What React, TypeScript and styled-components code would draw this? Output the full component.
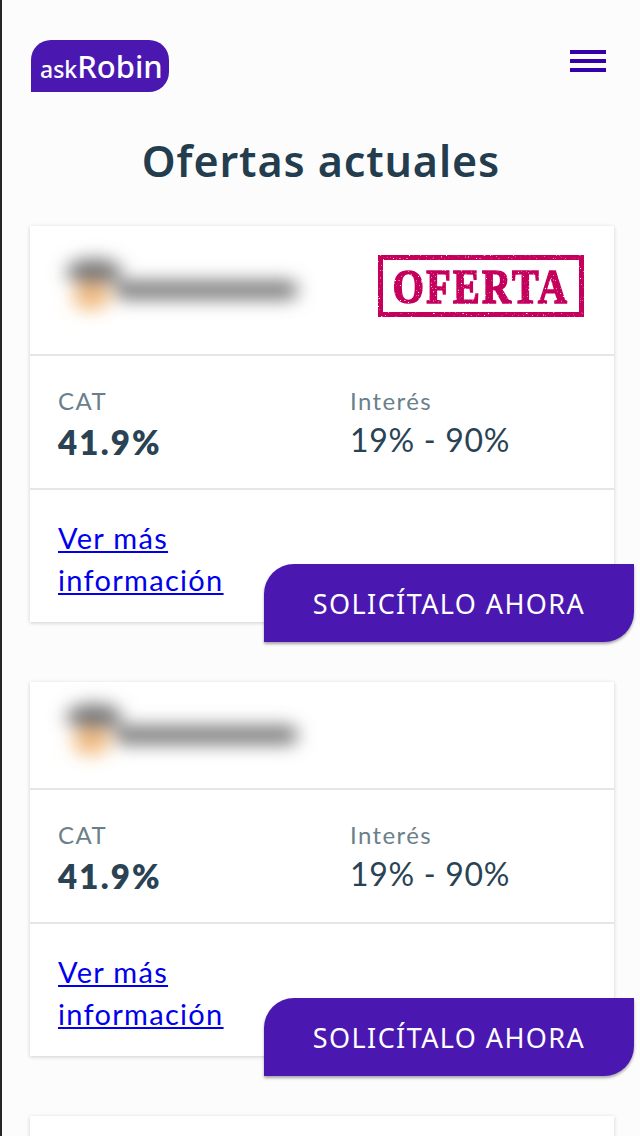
import React from 'react';
import styled, { createGlobalStyle } from 'styled-components';

const GlobalStyle = createGlobalStyle`
  html, body {
    margin: 0;
    padding: 0;
    overflow: hidden;
    background: #fcfcfc;
  }
`;

const Page = styled.div`
  height: 1136px;
  overflow: hidden;
  box-sizing: border-box;
  border-left: 2px solid #262626;
  background: #fcfcfc;
  font-family: 'Lato', 'Noto Sans', sans-serif;
  color: #2a4354;
`;

const Header = styled.header`
  display: flex;
  justify-content: space-between;
  align-items: flex-start;
  padding: 40px 34px 0 29px;
`;

const Logo = styled.div`
  display: flex;
  align-items: baseline;
  box-sizing: border-box;
  width: 138px;
  height: 52px;
  padding: 6px 0 0 9px;
  border-radius: 20px 20px 20px 0;
  background: #4a18b1;
  color: #fff;
  font-family: 'Noto Sans', sans-serif;
  font-weight: 500;
  line-height: 40px;
`;

const LogoSmall = styled.span`
  font-size: 23px;
`;

const LogoBig = styled.span`
  font-size: 31px;
`;

const Burger = styled.div`
  display: flex;
  flex-direction: column;
  gap: 5px;
  width: 36px;
  margin-top: 10px;
`;

const BurgerLine = styled.span`
  height: 4px;
  background: #3300aa;
`;

const Title = styled.h1`
  margin: 39px 0 35px;
  font-family: 'Noto Sans', sans-serif;
  font-size: 43px;
  line-height: 60px;
  font-weight: 600;
  letter-spacing: 0.9px;
  text-align: center;
  color: #233d4e;
`;

const CardList = styled.div`
  display: flex;
  flex-direction: column;
  gap: 60px;
  padding: 0 26px 0 28px;
`;

const Card = styled.section`
  position: relative;
  background: #fff;
  box-shadow: 0 1px 4px rgba(0, 0, 0, 0.18);
`;

const EmptyCard = styled(Card)`
  height: 120px;
`;

const Top = styled.div<{ $tall?: boolean }>`
  display: flex;
  justify-content: space-between;
  align-items: center;
  box-sizing: border-box;
  height: ${(p) => (p.$tall ? 128 : 106)}px;
  padding: 0 30px;
`;

const Blurred = styled.svg`
  display: block;
  width: 250px;
  height: 70px;
  margin-left: -4px;
  overflow: visible;
`;

const Stamp = styled.div`
  display: flex;
  align-items: center;
  justify-content: center;
  box-sizing: border-box;
  width: 206px;
  height: 62px;
  margin-top: -8px;
  border: 5px solid #c4005c;
  filter: url(#worn);
  font-family: 'Liberation Serif', serif;
  font-size: 40px;
  font-weight: 700;
  letter-spacing: 2.4px;
  color: #c4005c;
  -webkit-text-stroke: 1.4px #c4005c;
`;

const StampWord = styled.span`
  display: inline-block;
  transform: scaleY(1.22);
`;

const FilterDefs = styled.svg`
  position: absolute;
  width: 0;
  height: 0;
`;

const Stats = styled.div`
  display: grid;
  grid-template-columns: 292px 1fr;
  box-sizing: border-box;
  height: 136px;
  padding: 29px 28px 0;
  border-top: 2px solid #e6e6e6;
  border-bottom: 2px solid #e6e6e6;
`;

const Label = styled.div`
  font-size: 24px;
  line-height: 32px;
  letter-spacing: 1.4px;
  color: #6b7f8b;
`;

const Value = styled.div<{ $bold?: boolean }>`
  margin-top: ${(p) => (p.$bold ? 5 : 3)}px;
  font-size: ${(p) => (p.$bold ? 33 : 32)}px;
  line-height: 40px;
  letter-spacing: ${(p) => (p.$bold ? 2.2 : 0.7)}px;
  font-weight: ${(p) => (p.$bold ? 800 : 400)};
`;

const Footer = styled.div`
  box-sizing: border-box;
  height: 132px;
  padding: 27px 28px 0;
`;

const MoreLink = styled.a`
  display: block;
  width: 190px;
  font-size: 29px;
  line-height: 42px;
  letter-spacing: 1.3px;
  color: #0000ee;
  text-decoration: underline;
`;

const Cta = styled.button`
  position: absolute;
  right: -20px;
  bottom: -20px;
  width: 370px;
  height: 78px;
  padding: 0;
  border: 0;
  border-radius: 30px 0 30px 0;
  background: #4a18b1;
  box-shadow: 0 2px 3px rgba(0, 0, 0, 0.35);
  color: #fff;
  font-family: 'Noto Sans', sans-serif;
  font-size: 27px;
  letter-spacing: 1.4px;
`;

const BlurredLogo = ({ id }: { id: string }) => (
  <Blurred viewBox="0 0 250 70">
    <defs>
      <filter id={id} x="-20%" y="-80%" width="140%" height="260%">
        <feGaussianBlur stdDeviation="9" />
      </filter>
    </defs>
    <g filter={`url(#${id})`}>
      <ellipse cx="38" cy="17" rx="28" ry="13" fill="#757575" />
      <ellipse cx="35" cy="42" rx="19" ry="13" fill="#f2bc80" />
      <rect x="58" y="26" width="184" height="18" rx="9" fill="#757575" />
    </g>
  </Blurred>
);

const offers = [{ stamp: true }, { stamp: false }];

const App = () => (
  <Page>
    <GlobalStyle />
    <FilterDefs aria-hidden="true">
      <filter id="worn" x="0" y="0" width="100%" height="100%">
        <feTurbulence type="fractalNoise" baseFrequency="0.6" numOctaves="2" seed="4" result="noise" />
        <feColorMatrix
          in="noise"
          type="matrix"
          values="0 0 0 0 0  0 0 0 0 0  0 0 0 0 0  0 0 0 -6 5"
          result="specks"
        />
        <feComposite in="SourceGraphic" in2="specks" operator="in" />
      </filter>
    </FilterDefs>
    <Header>
      <Logo>
        <LogoSmall>ask</LogoSmall>
        <LogoBig>Robin</LogoBig>
      </Logo>
      <Burger>
        <BurgerLine />
        <BurgerLine />
        <BurgerLine />
      </Burger>
    </Header>
    <Title>Ofertas actuales</Title>
    <CardList>
      {offers.map(({ stamp }, idx) => (
        <Card key={idx}>
          <Top $tall={stamp}>
            <BlurredLogo id={`soft-${idx}`} />
            {stamp && (
              <Stamp>
                <StampWord>OFERTA</StampWord>
              </Stamp>
            )}
          </Top>
          <Stats>
            <div>
              <Label>CAT</Label>
              <Value $bold>41.9%</Value>
            </div>
            <div>
              <Label>Interés</Label>
              <Value>19% - 90%</Value>
            </div>
          </Stats>
          <Footer>
            <MoreLink href="#">Ver más información</MoreLink>
          </Footer>
          <Cta>SOLICÍTALO AHORA</Cta>
        </Card>
      ))}
      <EmptyCard />
    </CardList>
  </Page>
);

export default App;
